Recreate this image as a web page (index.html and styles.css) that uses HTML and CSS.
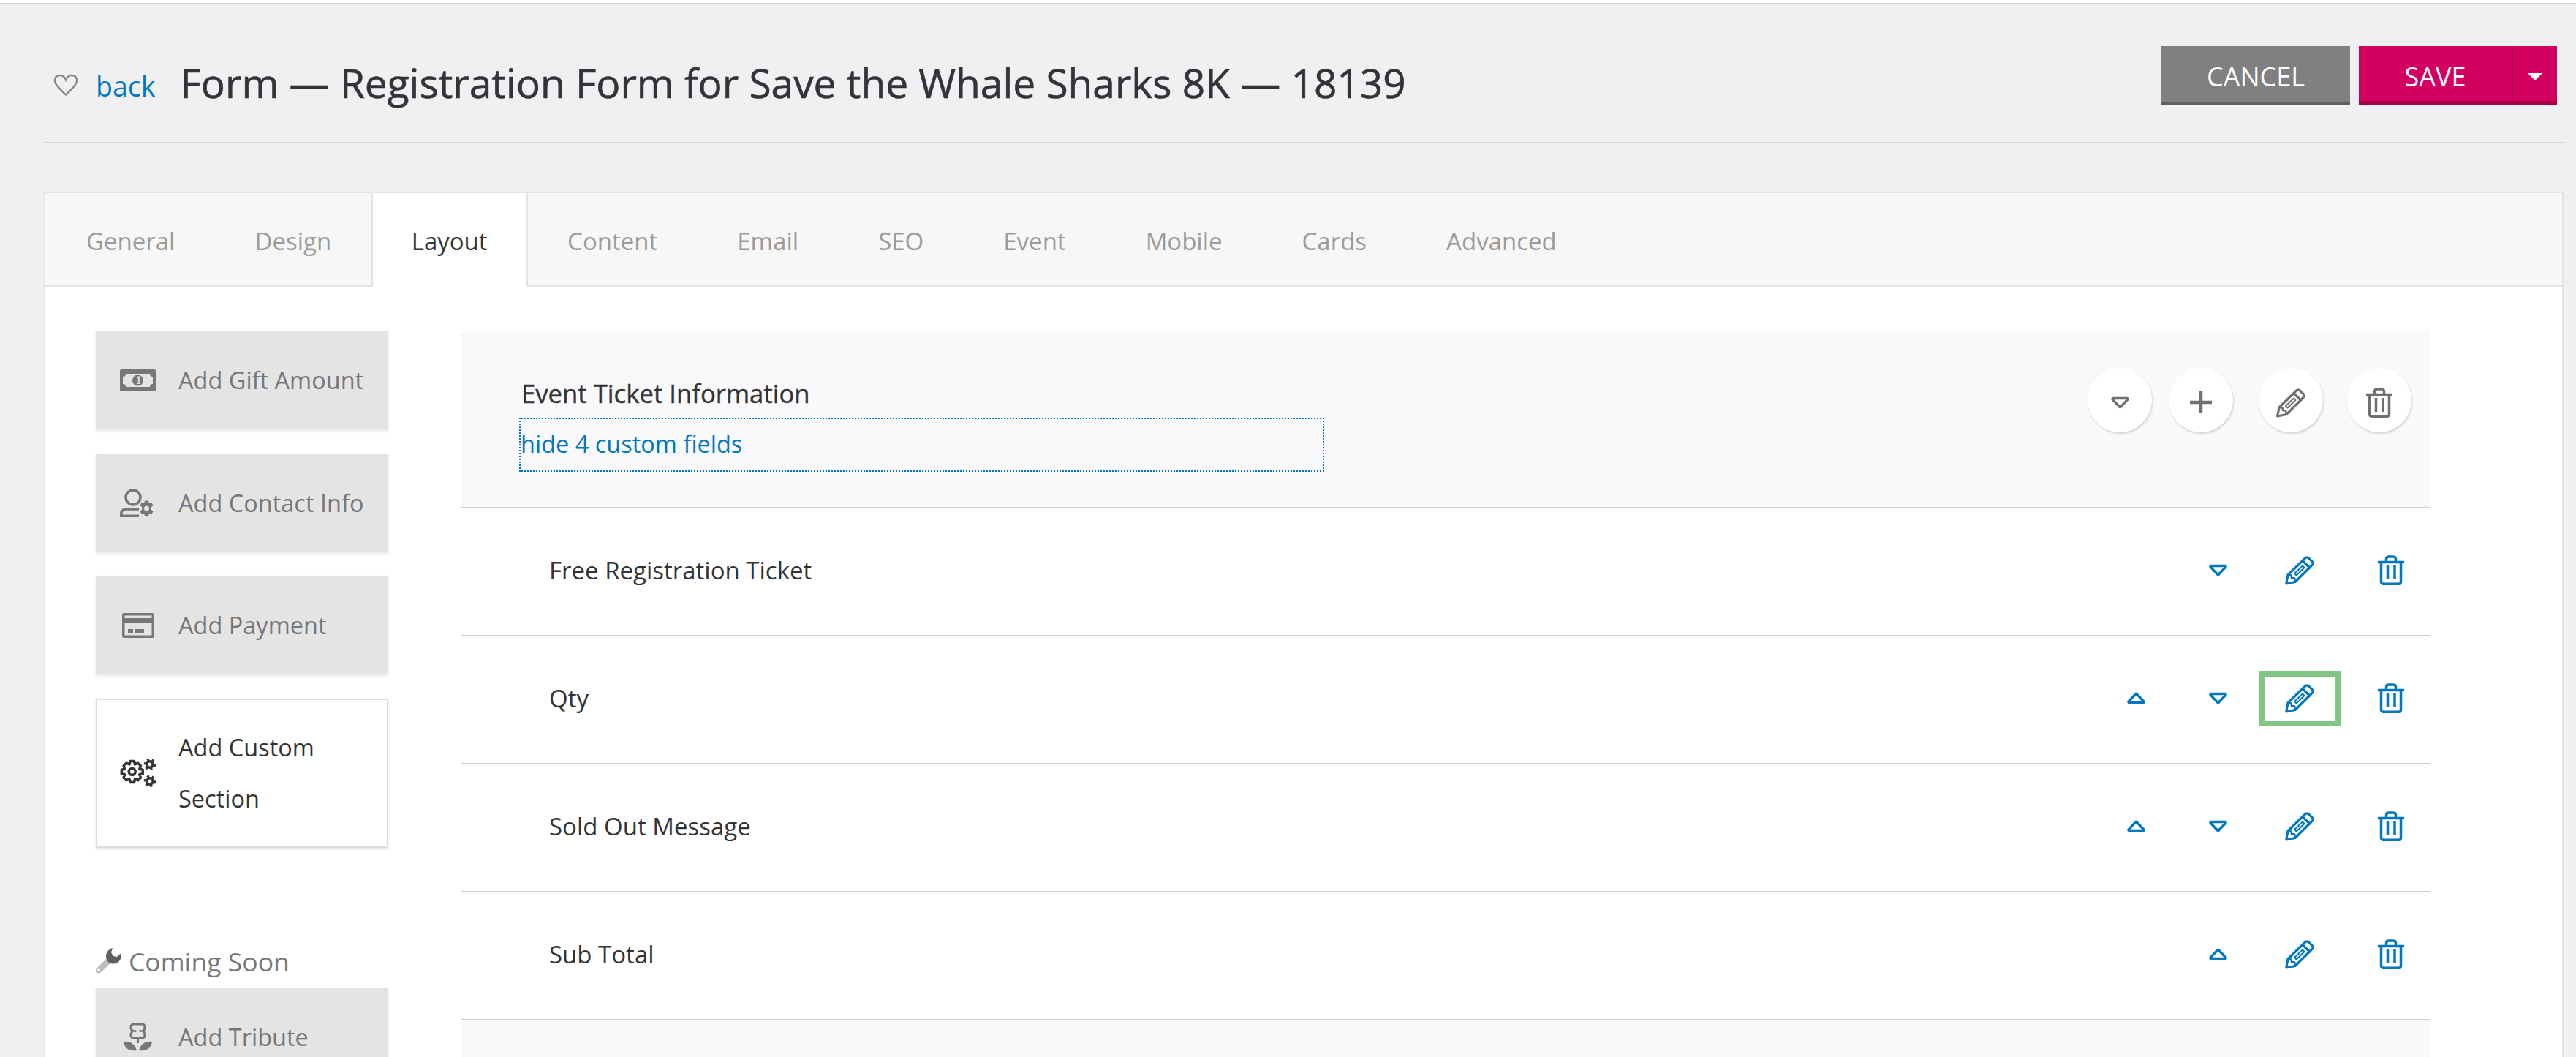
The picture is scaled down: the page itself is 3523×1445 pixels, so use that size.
FILE: index.html
```html
<!DOCTYPE html>
<html lang="en">
<head>
<meta charset="utf-8">
<title>Form — Registration Form for Save the Whale Sharks 8K — 18139</title>
<link rel="stylesheet" href="styles.css">
</head>
<body>
<svg class="defs" width="0" height="0" aria-hidden="true">
  <symbol id="i-down" viewBox="0 0 25 17"><path d="M3 2.500H22a1 1 0 0 1 .8 1.600L13.200 14.200a1 1 0 0 1-1.400 0L2.200 4.100A1 1 0 0 1 3 2.500Z" fill="none" stroke="currentColor" stroke-width="3.500" stroke-linejoin="round"/></symbol>
  <symbol id="i-up" viewBox="0 0 25 17"><path d="M3 14.500H22a1 1 0 0 0 .8-1.600L13.200 2.800a1 1 0 0 0-1.400 0L2.200 12.900A1 1 0 0 0 3 14.500Z" fill="none" stroke="currentColor" stroke-width="3.500" stroke-linejoin="round"/></symbol>
  <symbol id="i-pencil" viewBox="0 0 41 41"><g fill="none" stroke="currentColor" stroke-width="3.200" stroke-linejoin="round" stroke-linecap="round"><path d="M1.700 39 4 27 27.500 4Q30 1.500 32.500 4L37 8.500Q39.500 11 37 13.500L14 36.500Z"/><path d="M24 7.500 33.500 17"/><path d="M13 25 24 14.500 26.500 17 15.500 27.500Z" stroke-width="2"/><path d="M4 27 8.500 27.500 9 31 13 31.500 14 36.500" stroke-width="2.600"/></g></symbol>
  <symbol id="i-trash" viewBox="0 0 36 41"><g fill="none" stroke="currentColor" stroke-width="3.500"><path d="M0 9.500H36"/><path d="M11.500 9V5.500Q11.500 2 15 2H21Q24.500 2 24.500 5.500V9"/><path d="M4.500 9.500V36Q4.500 39.300 8 39.300H28Q31.500 39.300 31.500 36V9.500"/><path d="M13.500 14V33M23 14V33"/></g></symbol>
  <symbol id="i-plus" viewBox="0 0 30 30"><path d="M15 0V30M0 15H30" stroke="currentColor" stroke-width="4.500" fill="none"/></symbol>
  <symbol id="i-heart" viewBox="0 0 36 30"><path d="M18 28.500C11 22 5 16.500 3.500 12 1.500 6 5 2 9.500 2 13 2 16.500 4 18 8 19.500 4 23 2 26.500 2 31 2 34.500 6 32.500 12 31 16.500 25 22 18 28.500Z" fill="none" stroke="currentColor" stroke-width="2.400"/></symbol>
  <symbol id="i-money" viewBox="0 0 49 30"><path fill-rule="evenodd" fill="currentColor" d="M2 0H47a2 2 0 0 1 2 2V28a2 2 0 0 1-2 2H2a2 2 0 0 1-2-2V2A2 2 0 0 1 2 0ZM8 6A4 4 0 0 1 4 10V20A4 4 0 0 1 8 24H41A4 4 0 0 1 45 20V10A4 4 0 0 1 41 6Z"/><circle cx="24.500" cy="15" r="7.500" fill="currentColor"/><path d="M23 11.500 25.800 10.500V19M22.800 19H28" stroke="#e4e4e4" stroke-width="2" fill="none"/></symbol>
  <symbol id="i-contact" viewBox="0 0 49 39"><g fill="none" stroke="currentColor" stroke-width="3.500"><circle cx="18" cy="12" r="10"/><path d="M26 28H10Q1.800 28 1.800 34V37.300H26"/></g><path fill="currentColor" d="M34 15h5l.8 3.500 3.300-1.300 2.500 4.300-2.800 2.200v3.600l2.800 2.200-2.500 4.300-3.300-1.300L39 36h-5l-.8-3.500-3.300 1.300-2.500-4.300 2.800-2.200v-3.600l-2.800-2.200 2.500-4.300 3.300 1.300Z" transform="translate(0 1.500)"/><circle cx="36.500" cy="27" r="3.500" fill="#e4e4e4"/></symbol>
  <symbol id="i-card" viewBox="0 0 44 34"><path fill-rule="evenodd" fill="currentColor" d="M3 0H41a3 3 0 0 1 3 3V31a3 3 0 0 1-3 3H3a3 3 0 0 1-3-3V3A3 3 0 0 1 3 0ZM3.500 3.500V7H40.500V3.500ZM3.500 14V30.500H40.500V14Z"/><path fill="currentColor" d="M8 22h7v5H8ZM18 22h12v5H18Z"/></symbol>
  <symbol id="i-gears" viewBox="0 0 49 40"><g fill="none" stroke="currentColor" stroke-width="3.500"><path d="M14 3.500h5.500l1 4.500 4.200-1.800 3.800 3.800-1.800 4.200 4.500 1v5.500l-4.500 1 1.800 4.200-3.800 3.800-4.200-1.800-1 4.500H14l-1-4.500-4.200 1.800L5 26l1.800-4.200-4.500-1v-5.500l4.500-1L5 10l3.800-3.800L13 8Z" stroke-linejoin="round"/><circle cx="16.700" cy="18" r="4.500"/><circle cx="41" cy="8" r="4.200"/><circle cx="41" cy="31" r="4.200"/></g><g stroke="currentColor" stroke-width="3.500" stroke-dasharray="3 3.500"><circle cx="41" cy="8" r="6.500" fill="none"/><circle cx="41" cy="31" r="6.500" fill="none"/></g></symbol>
  <symbol id="i-wrench" viewBox="0 0 36 35"><path d="M1 29 15 15 21 21 7 34Q3 35 1 33Z" fill="#bdbdbd"/><circle cx="5" cy="30" r="1.800" fill="#fff"/><path d="M24 0C20 1 15 5 15 11 15 14 16 17 18 19 22 23 30 22 33 18 36 14 36 11 35.500 7L30 12 25 11 22 6Z" fill="#5f5f62"/></symbol>
  <symbol id="i-flower" viewBox="0 0 39 39"><g fill="none" stroke="currentColor" stroke-width="3"><path d="M14 2h11q4 0 4 4v1q0 3-3 4.500 3 1.500 3 4.500v1q0 4-4 4H14q-4 0-4-4v-1q0-3 3-4.500-3-1.500-3-4.500V6q0-4 4-4Z"/></g><g fill="currentColor"><circle cx="16" cy="11.500" r="1.700"/><circle cx="23" cy="11.500" r="1.700"/><path d="M18 22h3v6h-3Z"/><path d="M0 26C8 25 15 28 18 38 9 39 1 36 0 26ZM39 26C31 25 24 28 21 38 30 39 38 36 39 26Z"/></g></symbol>
</svg>

<div class="topline"></div>
<header class="head">
  <div class="crumb">
    <svg class="heart"><use href="#i-heart"/></svg>
    <a class="back">back</a>
    <h1 class="title">Form — Registration Form for Save the Whale Sharks 8K — 18139</h1>
  </div>
  <div class="actions">
    <button class="btn btn-cancel">CANCEL</button>
    <div class="save">
      <button class="btn btn-save">SAVE</button>
      <button class="btn btn-caret"><span class="caret"></span></button>
    </div>
  </div>
</header>

<section class="panel">
  <nav class="tabs">
    <a class="tab">General</a>
    <a class="tab">Design</a>
    <a class="tab tab-on">Layout</a>
    <a class="tab">Content</a>
    <a class="tab">Email</a>
    <a class="tab">SEO</a>
    <a class="tab">Event</a>
    <a class="tab">Mobile</a>
    <a class="tab">Cards</a>
    <a class="tab">Advanced</a>
  </nav>
  <div class="body">
    <aside class="side">
      <div class="card"><svg class="ci ci-money"><use href="#i-money"/></svg><span>Add Gift Amount</span></div>
      <div class="card"><svg class="ci ci-contact"><use href="#i-contact"/></svg><span>Add Contact Info</span></div>
      <div class="card"><svg class="ci ci-pay"><use href="#i-card"/></svg><span>Add Payment</span></div>
      <div class="card card-on"><svg class="ci ci-gears"><use href="#i-gears"/></svg><span>Add Custom<br>Section</span></div>
      <div class="soon"><svg class="wrench"><use href="#i-wrench"/></svg><span>Coming Soon</span></div>
      <div class="card"><svg class="ci ci-flower"><use href="#i-flower"/></svg><span>Add Tribute</span></div>
    </aside>
    <div class="main">
      <div class="sec">
        <div class="sec-text">
          <div class="sec-title">Event Ticket Information</div>
          <a class="sec-link">hide 4 custom fields</a>
        </div>
        <div class="circles">
          <span class="circle"><svg class="ic-tri"><use href="#i-down"/></svg></span>
          <span class="circle"><svg class="ic-plus"><use href="#i-plus"/></svg></span>
          <span class="circle c-gap"><svg class="ic-pen"><use href="#i-pencil"/></svg></span>
          <span class="circle c-gap2"><svg class="ic-trash"><use href="#i-trash"/></svg></span>
        </div>
      </div>
      <div class="row">
        <span class="row-name">Free Registration Ticket</span>
        <span class="slot"><svg class="ic-tri"><use href="#i-down"/></svg></span>
        <span class="slot slot-edit"><svg class="ic-pen"><use href="#i-pencil"/></svg></span>
        <span class="slot slot-del"><svg class="ic-trash"><use href="#i-trash"/></svg></span>
      </div>
      <div class="row">
        <span class="row-name">Qty</span>
        <span class="slot"><svg class="ic-tri"><use href="#i-up"/></svg></span>
        <span class="slot"><svg class="ic-tri"><use href="#i-down"/></svg></span>
        <span class="slot slot-edit slot-focus"><svg class="ic-pen"><use href="#i-pencil"/></svg></span>
        <span class="slot slot-del"><svg class="ic-trash"><use href="#i-trash"/></svg></span>
      </div>
      <div class="row">
        <span class="row-name">Sold Out Message</span>
        <span class="slot"><svg class="ic-tri"><use href="#i-up"/></svg></span>
        <span class="slot"><svg class="ic-tri"><use href="#i-down"/></svg></span>
        <span class="slot slot-edit"><svg class="ic-pen"><use href="#i-pencil"/></svg></span>
        <span class="slot slot-del"><svg class="ic-trash"><use href="#i-trash"/></svg></span>
      </div>
      <div class="row">
        <span class="row-name">Sub Total</span>
        <span class="slot"><svg class="ic-tri"><use href="#i-up"/></svg></span>
        <span class="slot slot-edit"><svg class="ic-pen"><use href="#i-pencil"/></svg></span>
        <span class="slot slot-del"><svg class="ic-trash"><use href="#i-trash"/></svg></span>
      </div>
      <div class="sec sec-next"></div>
    </div>
  </div>
</section>
</body>
</html>
```
FILE: styles.css
```css
* { box-sizing: border-box; }
html, body { margin: 0; height: 1445px; overflow: hidden; }
body { background: #f0f0f2; font-family: "Open Sans", sans-serif; color: #333; }
.defs { position: absolute; }
svg { display: block; }

.topline { height: 6px; background: #fff; border-bottom: 2px solid #d0d0d2; }

.head { display: flex; justify-content: space-between; align-items: flex-start; height: 190px; margin: 0 15px 0 60px; border-bottom: 2px solid #d2d2d4; padding: 57px 11px 0 13px; }
.crumb { display: flex; align-items: center; height: 100px; }
.heart { width: 36px; height: 30px; color: #8a8a8a; margin: 6px 0 0 -1px; }
.back { color: #0077c0; font-size: 37.5px; margin: 9px 0 0 23px; }
.title { margin: 0 0 0 34px; font-size: 55px; font-weight: 500; color: #333338; line-height: 70px; -webkit-text-stroke: .6px #333338; }

.actions { display: flex; gap: 12px; }
.btn { border: 0; margin: 0; color: #fff; font: 400 36px "Open Sans", sans-serif; padding: 6px 0 0; }
.btn-cancel { width: 258px; height: 81px; background: #808080; border-bottom: 5px solid #606060; }
.save { display: flex; height: 80px; }
.btn-save { width: 209px; background: #d30060; border-bottom: 5px solid #a80045; padding-top: 7px; }
.btn-caret { width: 62px; padding: 0; background: #d30060; border-bottom: 5px solid #a80045; border-left: 2px solid #a80045; display: flex; align-items: center; justify-content: center; }
.caret { width: 0; height: 0; border-left: 10px solid transparent; border-right: 10px solid transparent; border-top: 10px solid #fff; margin-top: 8px; }

.panel { margin: 66px 17px 0 60px; border: 2px solid #e4e4e4; border-bottom: 0; background: #fff; }
.tabs { display: flex; height: 128px; background: #f7f7f7; border-bottom: 3px solid #e4e4e4; padding-left: 1.5px; }
.tab { padding: 0 54.5px; line-height: 132px; font-size: 33px; color: #9b9b9b; }
.tab-on { background: #fff; color: #333; height: 128px; border-left: 2px solid #e4e4e4; border-right: 2px solid #e4e4e4; padding: 0 53px; }

.body { display: flex; gap: 100px; padding: 60px 0 0 69px; }
.side { width: 400px; flex: none; display: flex; flex-direction: column; gap: 32.5px; }
.card { height: 135px; flex: none; display: flex; align-items: center; background: #e4e4e4; box-shadow: 0 2px 4px rgba(0,0,0,.1); padding-left: 33px; font-size: 32.5px; color: #77777a; }
.card span { margin-left: auto; width: 287px; }
.card-on { height: 204px; background: #fff; border: 2px solid #ddd; padding-left: 31px; color: #333; line-height: 70px; }
.card-on span { width: 285px; }
.ci { color: #77777a; }
.ci-money { width: 49px; height: 30px; }
.ci-contact { width: 49px; height: 39px; }
.ci-pay { width: 44px; height: 34px; margin-left: 3px; }
.ci-gears { width: 49px; height: 40px; color: #333; }
.ci-flower { width: 39px; height: 39px; margin-left: 5px; }
.soon { display: flex; align-items: center; gap: 10px; margin: 100.5px 0 -18.5px -1px; font-size: 35.5px; color: #77777a; height: 44px; }
.wrench { width: 36px; height: 35px; flex: none; }

.main { width: 2692px; flex: none; }
.sec { display: flex; justify-content: space-between; height: 243px; background: #f9f9fb; border-bottom: 2px solid #d0d0d2; }
.sec-next { border-bottom: 0; height: 200px; }
.sec-text { padding: 61px 0 0 79px; }
.sec-title { font-size: 34.7px; font-weight: 500; line-height: 50px; padding-left: 3px; -webkit-text-stroke: .4px #333; }
.sec-link { display: flex; align-items: center; width: 1101px; height: 74px; margin-top: 8px; border: 2px dotted #0077c0; color: #0077c0; font-size: 32.5px; padding-bottom: 4px; }
.circles { display: flex; padding: 51px 25px 0 0; color: #707070; }
.circle { width: 88px; height: 88px; border-radius: 50%; background: #fff; display: flex; align-items: center; justify-content: center; padding-top: 6px; margin-left: 23px; box-shadow: 1px 2px 3px rgba(0,0,0,.16); }
.circle.c-gap { margin-left: 35px; }
.circle.c-gap2 { margin-left: 33px; }

.row { display: flex; align-items: center; height: 175px; border-bottom: 2px solid #d0d0d2; color: #0077c0; padding: 0 3px 4px 0; }
.row-name { margin-right: auto; padding-left: 120px; font-size: 33px; color: #333; }
.slot { width: 112px; height: 76px; display: flex; align-items: center; justify-content: center; }
.slot-edit { width: 113px; }
.slot-focus { border: 8px solid #81c784; }
.slot-del { width: 100px; margin-left: 18px; }
.ic-tri { width: 25px; height: 17px; }
.ic-plus { width: 30px; height: 30px; }
.ic-pen { width: 41px; height: 41px; }
.ic-trash { width: 36px; height: 41px; }
```
